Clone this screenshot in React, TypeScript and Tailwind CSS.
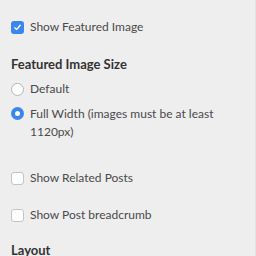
import React from 'react'

function Check({ on }: { on?: boolean }) {
  return on ? (
    <span className="w-[13px] h-[13px] rounded-[3px] bg-[#3a86f0] flex items-center justify-center shrink-0">
      <svg width="9" height="9" viewBox="0 0 9 9" fill="none">
        <path d="M1.8 4.8 L3.6 6.6 L7.2 2.2" stroke="white" strokeWidth="1.4" strokeLinecap="round" strokeLinejoin="round" />
      </svg>
    </span>
  ) : (
    <span className="w-[13px] h-[13px] rounded-[3px] bg-white border border-[#c4c4c4] shrink-0" />
  )
}

function Radio({ on }: { on?: boolean }) {
  return on ? (
    <span className="w-[13px] h-[13px] rounded-full bg-[#3a86f0] flex items-center justify-center shrink-0">
      <span className="w-[5px] h-[5px] rounded-full bg-white" />
    </span>
  ) : (
    <span className="w-[13px] h-[13px] rounded-full bg-white border border-[#b5b5b5] shrink-0" />
  )
}

export default function App() {
  return (
    <div
      className="w-[256px] h-[256px] overflow-hidden bg-[#eeeeee] border-r border-[#e2e2e2] text-[12px] text-[#4a4a4a] pl-[11px] pr-[30px]"
      style={{ fontFamily: 'Lato, "Open Sans", sans-serif' }}
    >
      <label className="flex items-center gap-[6px] mt-[18px] h-[18px]">
        <Check on />
        <span>Show Featured Image</span>
      </label>

      <h3 className="mt-[18px] text-[13px] font-bold text-[#333] leading-[20px]">Featured Image Size</h3>

      <label className="flex items-center gap-[6px] mt-[6px] h-[18px]">
        <Radio />
        <span>Default</span>
      </label>

      <label className="flex items-start gap-[6px] mt-[7px] leading-[18px]">
        <span className="mt-[2px]"><Radio on /></span>
        <span>Full Width (images must be at least 1120px)</span>
      </label>

      <label className="flex items-center gap-[6px] mt-[28px] h-[18px]">
        <Check />
        <span>Show Related Posts</span>
      </label>

      <label className="flex items-center gap-[6px] mt-[19px] h-[18px]">
        <Check />
        <span>Show Post breadcrumb</span>
      </label>

      <h3 className="mt-[16px] text-[13px] font-bold text-[#333] leading-[20px]">Layout</h3>
    </div>
  )
}
